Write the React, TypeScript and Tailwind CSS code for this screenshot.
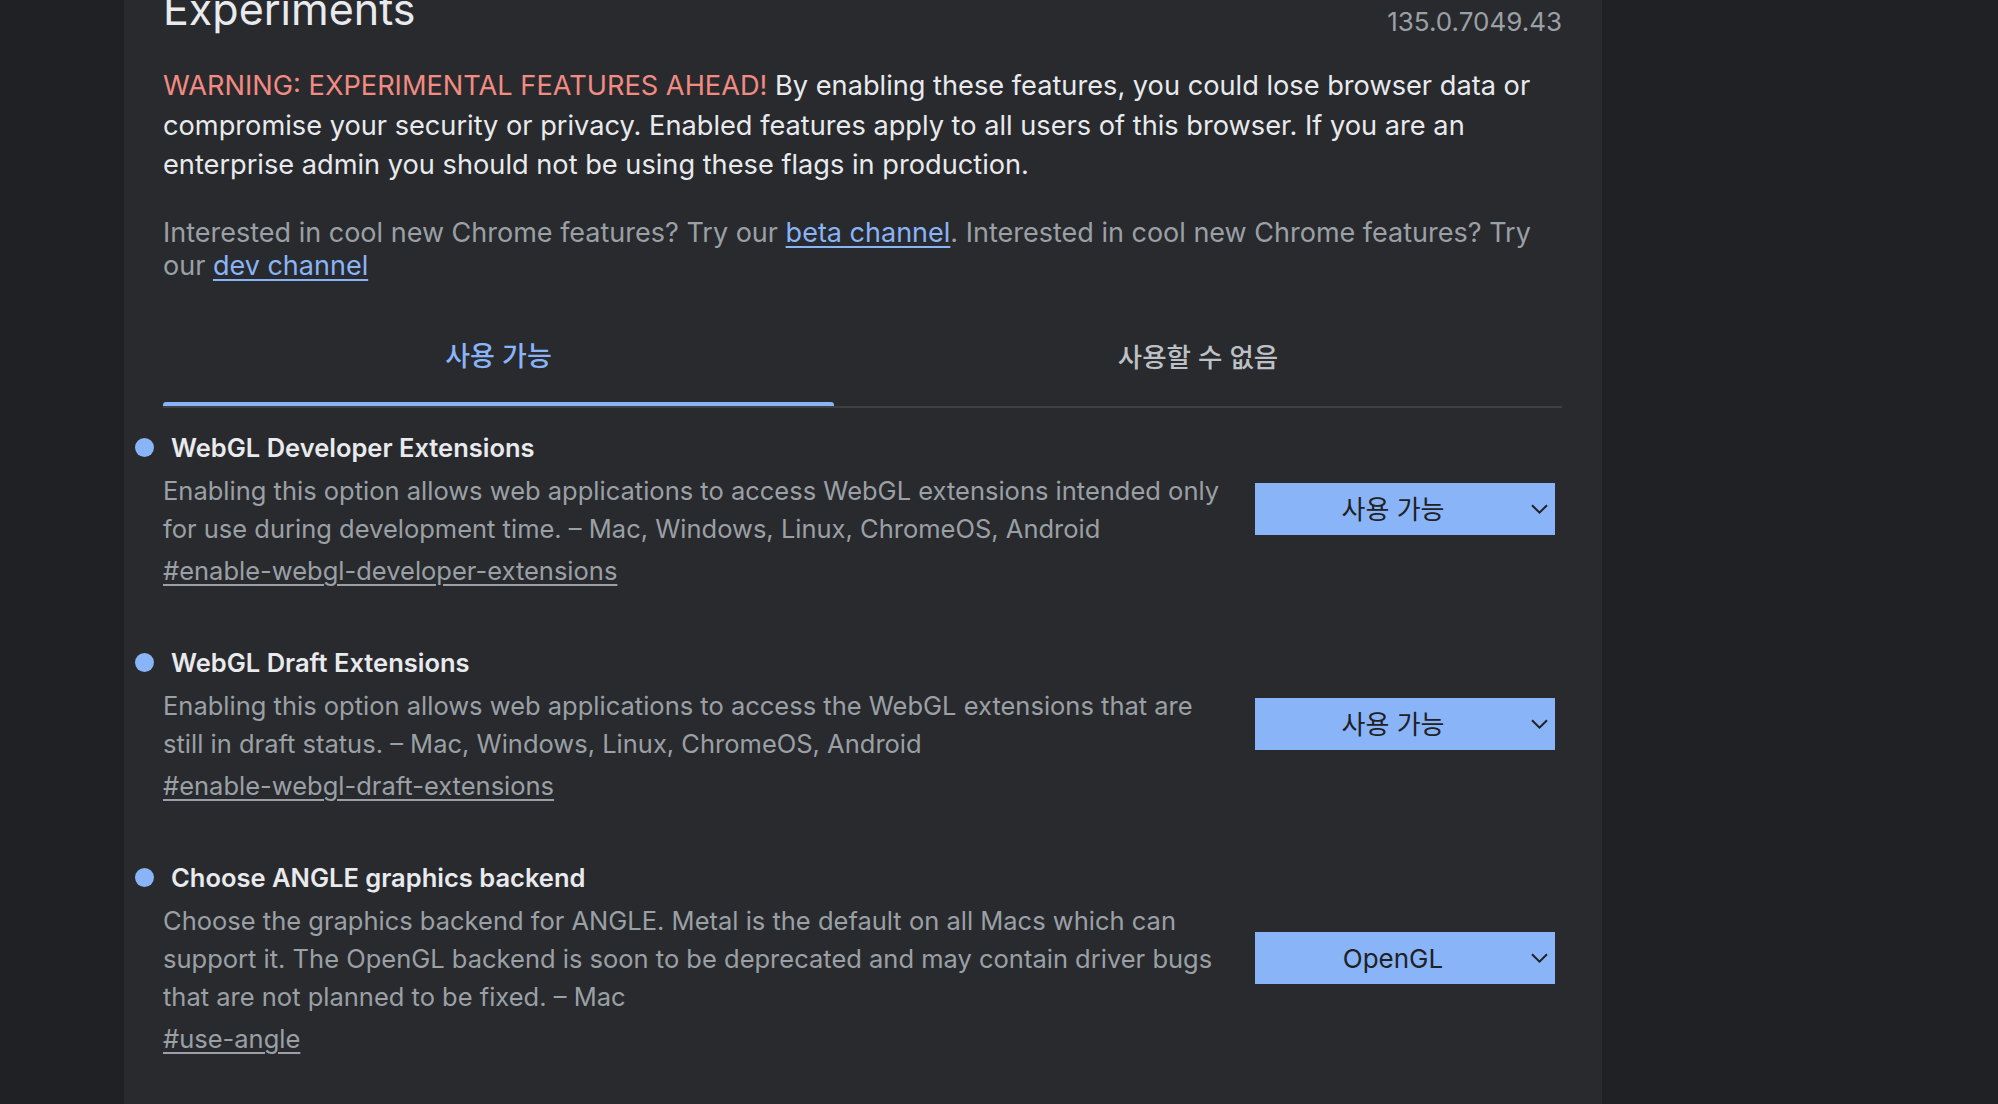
import React from 'react';

type Flag = {
  name: string;
  lines: string[];
  link: string;
  value: string;
};

const flags: Flag[] = [
  {
    name: 'WebGL Developer Extensions',
    lines: [
      'Enabling this option allows web applications to access WebGL extensions intended only',
      'for use during development time. – Mac, Windows, Linux, ChromeOS, Android',
    ],
    link: '#enable-webgl-developer-extensions',
    value: '사용 가능',
  },
  {
    name: 'WebGL Draft Extensions',
    lines: [
      'Enabling this option allows web applications to access the WebGL extensions that are',
      'still in draft status. – Mac, Windows, Linux, ChromeOS, Android',
    ],
    link: '#enable-webgl-draft-extensions',
    value: '사용 가능',
  },
  {
    name: 'Choose ANGLE graphics backend',
    lines: [
      'Choose the graphics backend for ANGLE. Metal is the default on all Macs which can',
      'support it. The OpenGL backend is soon to be deprecated and may contain driver bugs',
      'that are not planned to be fixed. – Mac',
    ],
    link: '#use-angle',
    value: 'OpenGL',
  },
];

const Chevron = () => (
  <svg width="17" height="10" viewBox="0 0 17 10" fill="none" className="shrink-0">
    <path d="M1 1.2L8.5 8.6L16 1.2" stroke="#202124" strokeWidth="2" />
  </svg>
);

const FlagRow = ({ flag }: { flag: Flag }) => (
  <div className="flex items-center">
    <div className="flex-1">
      <div className="flex items-center -ml-[28px]">
        <span className="w-[19px] h-[19px] rounded-full bg-[#8ab4f8] shrink-0" />
        <h3 className="ml-[17px] text-[25.5px] leading-[38px] font-semibold text-[#e8eaed] whitespace-nowrap">
          {flag.name}
        </h3>
      </div>
      <p className="mt-[5.5px] text-[25.5px] leading-[38px] text-[#9aa0a6] whitespace-nowrap">
        {flag.lines.map((l, i) => (
          <React.Fragment key={i}>
            {l}
            {i < flag.lines.length - 1 && <br />}
          </React.Fragment>
        ))}
      </p>
      <a className="mt-[4px] block w-fit text-[25.5px] leading-[38px] text-[#9aa0a6] underline underline-offset-[4px]">
        {flag.link}
      </a>
    </div>
    <button className="mr-[7px] w-[300px] h-[52px] bg-[#8ab4f8] flex items-center pr-[7px] text-[#202124] text-[26px]">
      <span className="flex-1 text-center">{flag.value}</span>
      <Chevron />
    </button>
  </div>
);

export default function App() {
  return (
    <div
      className="h-[1104px] w-full flex bg-[#202124] overflow-hidden"
      style={{ fontFamily: 'Inter, "Noto Sans CJK KR", sans-serif' }}
    >
      <div className="w-[124px] shrink-0" />
      <div className="w-[1478px] shrink-0 bg-[#292a2d] px-[39px] pr-[40px]">
        <div className="flex justify-between items-start">
          <h1 className="-mt-[16px] text-[43px] leading-[50px] text-[#e8eaed]">Experiments</h1>
          <div className="mt-[6px] text-[26px] leading-[32px] text-[#9aa0a6]">135.0.7049.43</div>
        </div>

        <p className="mt-[28px] text-[27.2px] leading-[39.5px] text-[#e8eaed] whitespace-nowrap">
          <span className="text-[#f28b82]">WARNING: EXPERIMENTAL FEATURES AHEAD!</span> By enabling these
          features, you could lose browser data or
          <br />
          compromise your security or privacy. Enabled features apply to all users of this browser. If you
          are an
          <br />
          enterprise admin you should not be using these flags in production.
        </p>

        <p className="mt-[31px] text-[27px] leading-[33px] text-[#9aa0a6] whitespace-nowrap">
          Interested in cool new Chrome features? Try our{' '}
          <a className="text-[#8ab4f8] underline underline-offset-[4px]">beta channel</a>. Interested in
          cool new Chrome features? Try
          <br />
          our <a className="text-[#8ab4f8] underline underline-offset-[4px]">dev channel</a>
        </p>

        <div className="mt-[27px] flex border-b-2 border-[#3c4043]">
          <div className="w-[671px] flex flex-col">
            <div className="h-[93px] pt-[5px] flex items-center justify-center text-[27px] font-medium text-[#8ab4f8]">
              사용 가능
            </div>
            <div className="h-[4px] rounded-t-[3px] bg-[#8ab4f8]" />
          </div>
          <div className="flex-1 flex flex-col">
            <div className="h-[93px] pt-[5px] flex items-center justify-center text-[26.5px] font-medium text-[#bdc1c6]">
              사용할 수 없음
            </div>
            <div className="h-[4px]" />
          </div>
        </div>

        <div className="mt-[21px] flex flex-col gap-[53.5px]">
          {flags.map((f) => (
            <FlagRow key={f.name} flag={f} />
          ))}
        </div>
      </div>
    </div>
  );
}
